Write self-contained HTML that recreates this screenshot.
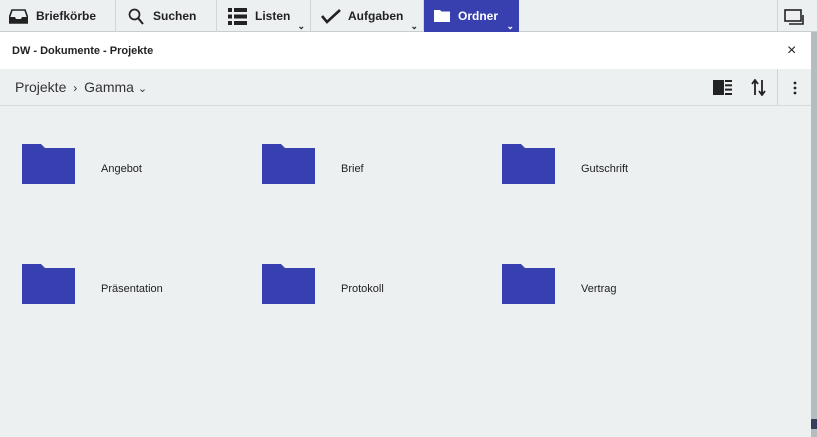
<!DOCTYPE html>
<html><head><meta charset="utf-8"><style>
*{margin:0;padding:0;box-sizing:border-box}
body{width:817px;height:437px;overflow:hidden;background:#edf0f1;font-family:"Liberation Sans",sans-serif;position:relative}
.top{position:absolute;left:0;top:0;width:817px;height:32px;background:#edf0f1;border-bottom:1px solid #c8cdd0}
.tab{position:absolute;top:0;height:32px;border-right:1px solid #cfd4d6;font-weight:bold;font-size:12px;color:#222;line-height:33px}
.tab svg{position:absolute}
.chev{position:absolute;bottom:1px;right:5px;font-size:9px;line-height:9px}
.hdr{position:absolute;top:32px;left:0;width:817px;height:37px;background:#fff;font-weight:bold;font-size:11px;color:#222;line-height:38px;padding-left:12px}
.bar{position:absolute;top:69px;left:0;width:811px;height:37px;border-bottom:1px solid #d6dadc;font-size:14px;color:#333;line-height:37px;padding-left:15px}
.f{position:absolute;width:53px;height:40px}
.lbl{position:absolute;font-size:11px;color:#222}
</style></head><body>
<div class="top">
 <div class="tab" style="left:0;width:116px"><svg style="left:9px;top:9px" width="19" height="15" viewBox="0 0 19 15"><path d="M3 1h13l2.5 7v6H.5V8z" fill="none" stroke="#222" stroke-width="1.6"/><path d="M1 8h5l1 2h5l1-2h5v6H1z" fill="#222"/></svg><span style="position:absolute;left:36px">Briefkörbe</span></div>
 <div class="tab" style="left:116px;width:101px"><svg style="left:12px;top:8px" width="16" height="17" viewBox="0 0 16 17"><circle cx="6.5" cy="6.5" r="5" fill="none" stroke="#222" stroke-width="1.7"/><path d="M10 10l5 6" stroke="#222" stroke-width="2"/></svg><span style="position:absolute;left:37px">Suchen</span></div>
 <div class="tab" style="left:217px;width:94px"><svg style="left:11px;top:8px" width="19" height="17" viewBox="0 0 19 17"><rect x="0" y="0" width="4" height="4" fill="#222"/><rect x="6" y="0" width="13" height="4" fill="#222"/><rect x="0" y="6.5" width="4" height="4" fill="#222"/><rect x="6" y="6.5" width="13" height="4" fill="#222"/><rect x="0" y="13" width="4" height="4" fill="#222"/><rect x="6" y="13" width="13" height="4" fill="#222"/></svg><span style="position:absolute;left:38px">Listen</span><span class="chev">⌄</span></div>
 <div class="tab" style="left:311px;width:113px"><svg style="left:10px;top:9px" width="20" height="15" viewBox="0 0 20 15"><path d="M1 7l5 6L19 1" fill="none" stroke="#222" stroke-width="2.6"/></svg><span style="position:absolute;left:37px">Aufgaben</span><span class="chev">⌄</span></div>
 <div class="tab" style="left:424px;width:95px;background:#3840b0;color:#fff;border:none"><svg style="left:10px;top:10px" width="16" height="12" viewBox="0 0 16 12"><path d="M0 0h6l1.5 1.5H16V12H0z" fill="#fff"/></svg><span style="position:absolute;left:34px">Ordner</span><span class="chev" style="color:#fff">⌄</span></div>
 <div style="position:absolute;left:777px;top:0;width:1px;height:32px;background:#cfd4d6"></div>
 <svg style="position:absolute;left:784px;top:9px" width="22" height="16" viewBox="0 0 22 16"><rect x="1" y="1" width="16" height="11" fill="none" stroke="#222" stroke-width="1.6"/><path d="M19 6v9H5" fill="none" stroke="#222" stroke-width="1.6"/></svg>
</div>
<div class="hdr">DW - Dokumente - Projekte<span style="position:absolute;left:787px;top:0;font-weight:normal;font-size:16px;color:#222">×</span></div>
<div class="bar">Projekte <span style="font-size:12px;margin:0 3px">›</span> Gamma <span style="font-size:11px">⌄</span>
 <svg style="position:absolute;left:713px;top:11px" width="19" height="15" viewBox="0 0 19 15"><rect x="0" y="0" width="11" height="15" fill="#222"/><rect x="12" y="0" width="7" height="2" fill="#222"/><rect x="12" y="4.3" width="7" height="2" fill="#222"/><rect x="12" y="8.6" width="7" height="2" fill="#222"/><rect x="12" y="13" width="7" height="2" fill="#222"/></svg>
 <svg style="position:absolute;left:751px;top:10px" width="15" height="17" viewBox="0 0 15 17"><path d="M4 16V2M1 5l3-4 3 4M11 1v14M8 12l3 4 3-4" fill="none" stroke="#222" stroke-width="1.8"/></svg>
 <div style="position:absolute;left:777px;top:0;width:1px;height:36px;background:#cfd4d6"></div>
 <svg style="position:absolute;left:793px;top:12px" width="4" height="14" viewBox="0 0 4 14"><circle cx="2" cy="2" r="1.4" fill="#222"/><circle cx="2" cy="7" r="1.4" fill="#222"/><circle cx="2" cy="12" r="1.4" fill="#222"/></svg>
</div>
<div style="position:absolute;left:811px;top:32px;width:6px;height:405px;background:#b4bcbf"></div>
<div style="position:absolute;left:811px;top:419px;width:6px;height:10px;background:#3a3d60"></div>

<svg class="f" style="left:22px;top:144px" viewBox="0 0 53 40"><path d="M0 0h19l4 4h30v36H0z" fill="#3640b0"/></svg><div class="lbl" style="left:101px;top:163px">Angebot</div>
<svg class="f" style="left:262px;top:144px" viewBox="0 0 53 40"><path d="M0 0h19l4 4h30v36H0z" fill="#3640b0"/></svg><div class="lbl" style="left:341px;top:163px">Brief</div>
<svg class="f" style="left:502px;top:144px" viewBox="0 0 53 40"><path d="M0 0h19l4 4h30v36H0z" fill="#3640b0"/></svg><div class="lbl" style="left:581px;top:163px">Gutschrift</div>
<svg class="f" style="left:22px;top:264px" viewBox="0 0 53 40"><path d="M0 0h19l4 4h30v36H0z" fill="#3640b0"/></svg><div class="lbl" style="left:101px;top:283px">Präsentation</div>
<svg class="f" style="left:262px;top:264px" viewBox="0 0 53 40"><path d="M0 0h19l4 4h30v36H0z" fill="#3640b0"/></svg><div class="lbl" style="left:341px;top:283px">Protokoll</div>
<svg class="f" style="left:502px;top:264px" viewBox="0 0 53 40"><path d="M0 0h19l4 4h30v36H0z" fill="#3640b0"/></svg><div class="lbl" style="left:581px;top:283px">Vertrag</div>
</body></html>
